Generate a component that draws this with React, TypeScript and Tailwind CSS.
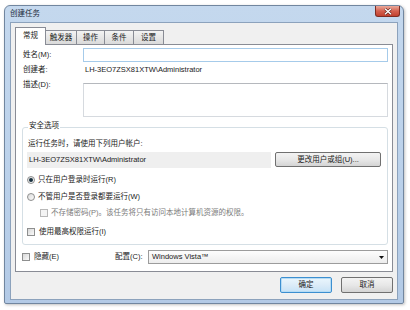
import React from "react";

const Check: React.FC<{ disabled?: boolean }> = ({ disabled }) => (
    <span
        className={
            disabled
                ? "block h-[8px] w-[8px] flex-none border border-[#b8b8b8] bg-[#f4f4f4]"
                : "block h-[8px] w-[8px] flex-none border border-[#8e8f8f] bg-linear-to-br from-[#d8d8d8] to-[#fafafa]"
        }
    />
);

const Radio: React.FC<{ checked?: boolean }> = ({ checked }) => (
    <span className="flex h-[8px] w-[8px] flex-none items-center justify-center rounded-full border border-[#8e8f8f] bg-linear-to-br from-[#dcdcdc] to-[#fbfbfb]">
        {checked && <span className="block h-[4px] w-[4px] rounded-full bg-[#17303f]" />}
    </span>
);

const Tab: React.FC<{ label: string; w: string; active?: boolean }> = ({ label, w, active }) =>
    active ? (
        <div className={`${w} relative z-10 -mb-px flex h-[18px] items-start justify-center border border-b-0 border-[#898c95] bg-white pt-[3px]`}>
            {label}
        </div>
    ) : (
        <div className={`${w} flex h-[14px] items-center justify-center border-t border-r border-[#898c95] bg-linear-to-b from-[#f3f3f3] to-[#dadada]`}>
            {label}
        </div>
    );

const App: React.FC = () => {
    return (
        <div className="h-[310px] w-[410px] bg-white pt-[5px] pl-[4px] font-[family-name:'Liberation_Sans','Noto_Sans_CJK_SC',sans-serif] text-[7.5px] leading-[10px] text-[#1a1a1a]">
            <div className="flex h-[299px] w-[400px] flex-col rounded-t-[6px] rounded-b-[2px] border border-[#71869f] bg-linear-to-b from-[#c4d8ee] via-[#bcd2eb] to-[#b3cae6] shadow-[1px_1px_3px_rgba(0,0,0,0.25)]">
                {/* title bar */}
                <div className="flex h-[16px] items-start justify-between pl-[5px] pr-[3px]">
                    <div className="mt-[3px] text-[#1c2a3a]">创建任务</div>
                    <div className="flex h-[11px] w-[25px] items-center justify-center rounded-b-[3px] border border-t-0 border-[#7c2d24] bg-linear-to-b from-[#e9a99b] via-[#d4604f] to-[#c2412f]">
                        <svg width="8" height="7" viewBox="0 0 8 7">
                            <path d="M1 0.8 L7 6.2 M7 0.8 L1 6.2" stroke="#5a1d16" strokeWidth="2.6" />
                            <path d="M1 0.8 L7 6.2 M7 0.8 L1 6.2" stroke="#ffffff" strokeWidth="1.5" />
                        </svg>
                    </div>
                </div>

                {/* client area */}
                <div className="ml-[5px] flex h-[278px] w-[388px] flex-col border border-[#8ca2bc] bg-[#f0f0f0] pt-[4px] pl-[4px]">
                    <div className="flex h-[17px] items-end">
                        <Tab label="常规" w="w-[31px]" active />
                        <Tab label="触发器" w="w-[31px]" />
                        <Tab label="操作" w="w-[28px]" />
                        <Tab label="条件" w="w-[29px]" />
                        <Tab label="设置" w="w-[30px]" />
                    </div>

                    {/* tab panel */}
                    <div className="flex h-[228px] w-[378px] flex-col border border-[#898c95] bg-white pt-[3px] pr-[4px] pl-[6px]">
                        <div className="flex h-[14px] items-center">
                            <div className="w-[61px] pl-[1px]">姓名(M):</div>
                            <div className="h-[14px] w-[305px] border border-[#a6cbea] bg-white" />
                        </div>
                        <div className="flex h-[15px] items-center">
                            <div className="w-[61px] pl-[1px]">创建者:</div>
                            <div className="pl-[2px]">LH-3EO7ZSX81XTW\Administrator</div>
                        </div>
                        <div className="mt-[6px] flex">
                            <div className="-mt-[3px] w-[61px] pl-[1px]">描述(D):</div>
                            <div className="h-[34px] w-[305px] border border-[#d6dadf] border-t-[#b5b8bd] bg-white" />
                        </div>

                        {/* group box */}
                        <div className="mt-[10px] flex h-[118px] w-[366px] flex-col rounded-[3px] border border-[#d5dfe5] pl-[4px]">
                            <div className="-mt-[7px] ml-[1px] self-start bg-white px-[1px]">安全选项</div>
                            <div className="mt-[8px] ml-[1px]">运行任务时，请使用下列用户帐户:</div>
                            <div className="mt-[3px] flex h-[16px] items-start">
                                <div className="h-[16px] w-[244px] bg-[#efefef] pl-[2px] leading-[16px]">
                                    LH-3EO7ZSX81XTW\Administrator
                                </div>
                                <div className="ml-[4px] flex h-[15px] w-[106px] items-center justify-center rounded-[2px] border border-[#707070] bg-linear-to-b from-[#f3f3f3] via-[#e8e8e8] to-[#d4d4d4]">
                                    更改用户或组(U)...
                                </div>
                            </div>
                            <div className="mt-[7px] flex h-[10px] items-center">
                                <Radio checked />
                                <span className="ml-[3px]">只在用户登录时运行(R)</span>
                            </div>
                            <div className="mt-[7px] flex h-[10px] items-center">
                                <Radio />
                                <span className="ml-[3px]">不管用户是否登录都要运行(W)</span>
                            </div>
                            <div className="mt-[6px] flex h-[10px] items-center pl-[13px] text-[#7b7b7b]">
                                <Check disabled />
                                <span className="ml-[3px]">不存储密码(P)。该任务将只有访问本地计算机资源的权限。</span>
                            </div>
                            <div className="mt-[9px] flex h-[10px] items-center">
                                <Check />
                                <span className="ml-[4px]">使用最高权限运行(I)</span>
                            </div>
                        </div>

                        <div className="mt-[5px] flex h-[14px] items-center">
                            <Check />
                            <span className="ml-[4px] w-[81px]">隐藏(E)</span>
                            <span className="w-[33px]">配置(C):</span>
                            <div className="flex h-[14px] w-[240px] items-center justify-between border border-[#9c9c9c] bg-linear-to-b from-[#fdfdfd] to-[#ededed] pr-[3px] pl-[3px]">
                                <span>Windows Vista™</span>
                                <svg width="5" height="3" viewBox="0 0 5 3">
                                    <path d="M0 0 H5 L2.5 3 Z" fill="#111" />
                                </svg>
                            </div>
                        </div>
                    </div>

                    {/* buttons */}
                    <div className="mt-[5px] flex justify-end gap-[9px] pr-[4px]">
                        <div className="flex h-[16px] w-[52px] items-center justify-center rounded-[2px] border border-[#3c8fd0] bg-linear-to-b from-[#eaf6fd] via-[#dcecf8] to-[#c6e2f6] shadow-[inset_0_0_0_1px_#b6dcf5]">
                            确定
                        </div>
                        <div className="flex h-[16px] w-[52px] items-center justify-center rounded-[2px] border border-[#707070] bg-linear-to-b from-[#f3f3f3] via-[#e8e8e8] to-[#d4d4d4]">
                            取消
                        </div>
                    </div>
                </div>
            </div>
        </div>
    );
};

export default App;
